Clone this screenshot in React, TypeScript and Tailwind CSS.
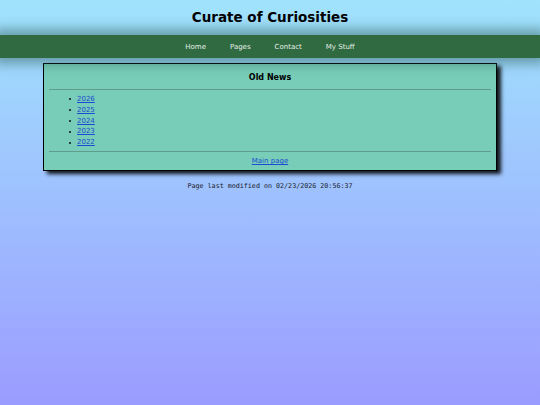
export default function App() {
  const years = ["2026", "2025", "2024", "2023", "2022"];
  const nav = ["Home", "Pages", "Contact", "My Stuff"];

  return (
    <div
      className="min-h-[405px] bg-gradient-to-b from-[#a0e3fc] to-[#9b9bff] font-['DejaVu_Sans',sans-serif] text-black"
    >
      <div className="h-[35px] flex items-center justify-center">
        <h1 className="text-[13.5px] font-bold">Curate of Curiosities</h1>
      </div>
      <nav className="h-[23px] bg-[#306a41] flex items-center justify-center gap-[24px] pt-[1px] shadow-[0_0_12px_6px_rgba(30,80,70,0.45)] relative z-10">
        {nav.map((n) => (
          <span key={n} className="text-[7px] text-[#e6efe8]">
            {n}
          </span>
        ))}
      </nav>
      <div className="mx-[43px] mt-[5px] w-[454px] border border-black bg-[#78cdb8] shadow-[4px_3px_4px_rgba(0,0,0,0.9)] px-[5px]">
        <h2 className="text-[8px] font-bold text-center leading-[10px] pt-[9px] pb-[6px]">Old News</h2>
        <hr className="border-t border-[#5e9c8c]" />
        <ul className="pl-[20px] pt-[4px] pb-[3.5px] text-[7px] leading-[10.8px]">
          {years.map((y) => (
            <li key={y} className="flex items-center">
              <span className="w-[2px] h-[2px] rounded-full bg-[#111] mr-[6px]" />
              <a href="#" className="text-[#1b4bd2] underline">
                {y}
              </a>
            </li>
          ))}
        </ul>
        <hr className="border-t border-[#5e9c8c]" />
        <div className="text-center text-[7px] leading-[9px] pt-[4.5px] pb-[4.5px]">
          <a href="#" className="text-[#1b4bd2] underline">
            Main page
          </a>
        </div>
      </div>
      <p className="text-center font-['DejaVu_Sans_Mono',monospace] text-[6.7px] mt-[10px] text-[#1a1a2a]">
        Page last modified on 02/23/2026 20:56:37
      </p>
    </div>
  );
}
